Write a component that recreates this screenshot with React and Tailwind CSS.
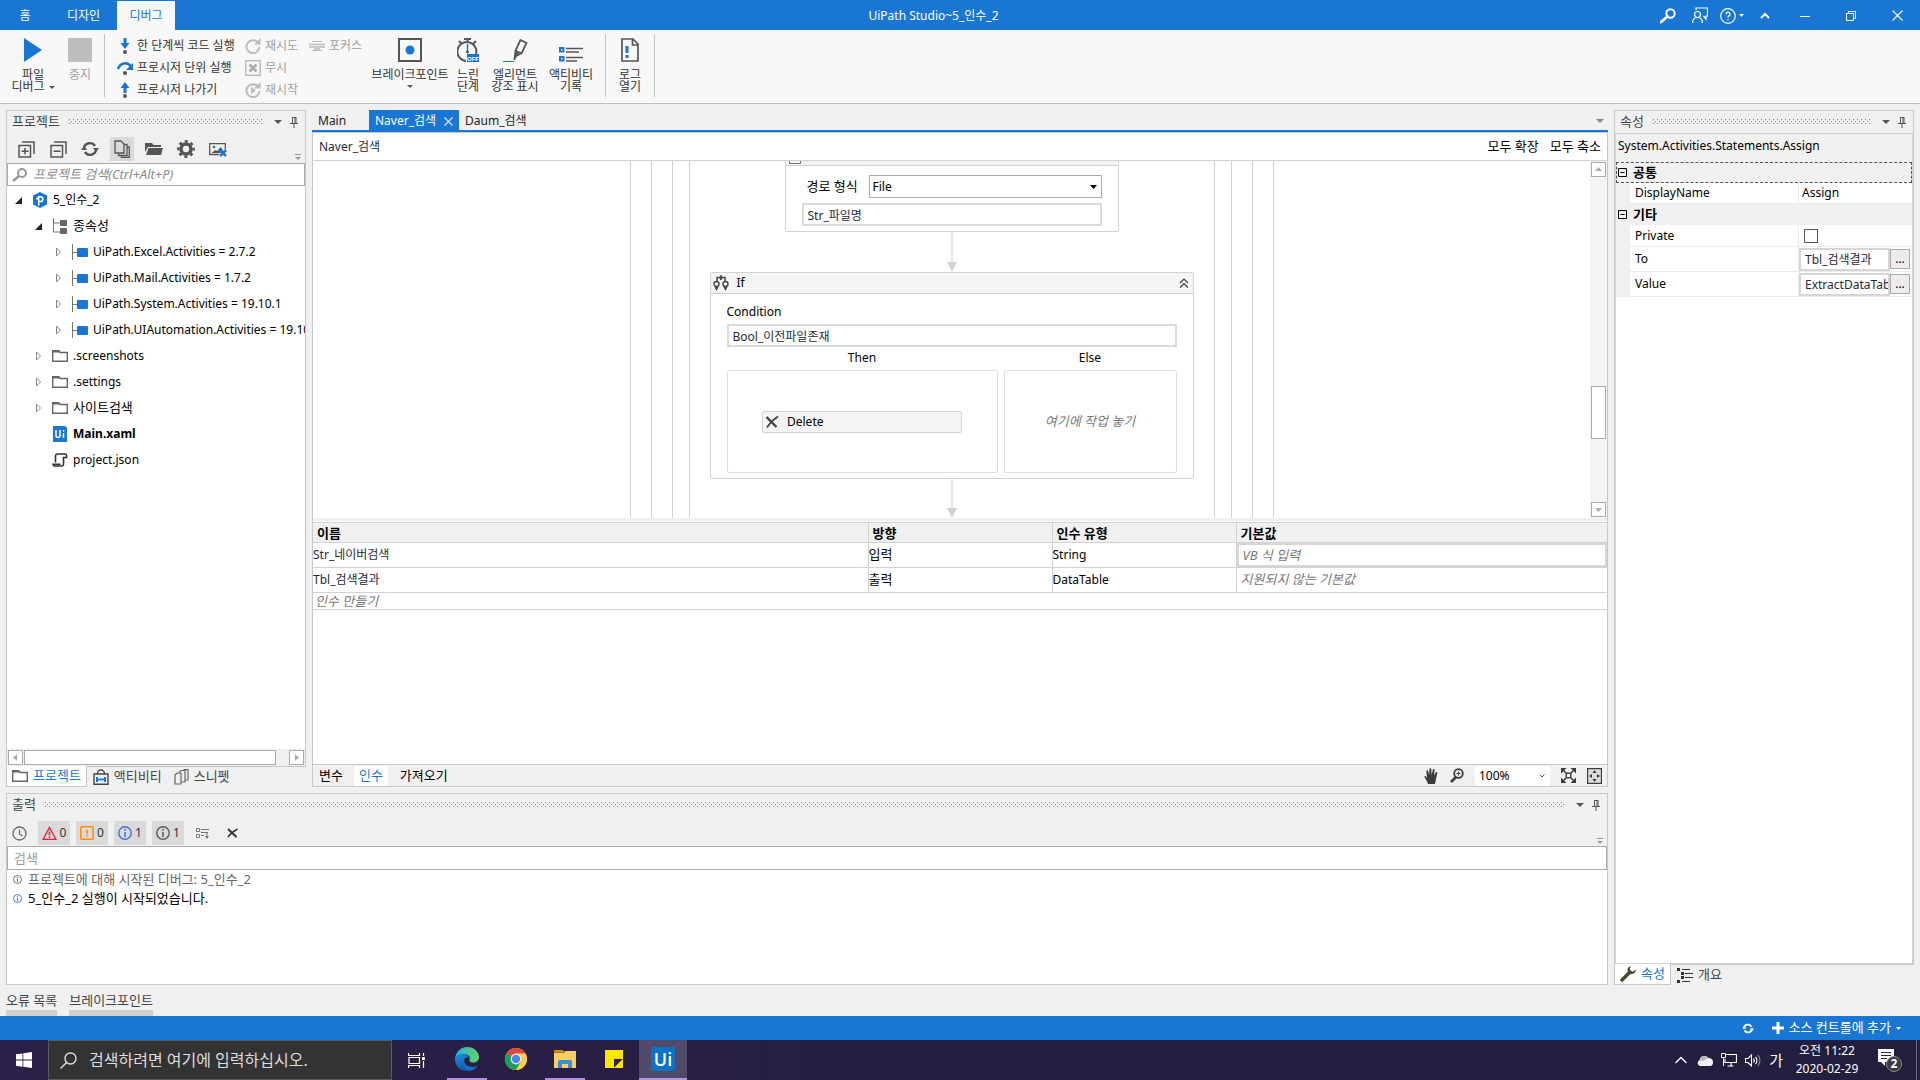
import React from 'react';

const DARK = '#555555';
const BLUE = '#1976d2';

function Svg({ w, h, children, ...rest }) {
  return (
    <svg width={w} height={h} viewBox={`0 0 ${w} ${h}`} fill="none" className="shrink-0" aria-hidden="true" {...rest}>
      {children}
    </svg>
  );
}

/* ---------- shared small pieces ---------- */

function Dots() {
  return (
    <svg className="h-[6px] w-0 flex-1" aria-hidden="true">
      <defs>
        <pattern id="grip" width="4" height="4" patternUnits="userSpaceOnUse">
          <rect x="0" y="0" width="1" height="1" fill="#8a8a8a" />
          <rect x="2" y="2" width="1" height="1" fill="#8a8a8a" />
        </pattern>
      </defs>
      <rect width="100%" height="5" fill="url(#grip)" />
    </svg>
  );
}

function Caret({ color = DARK, w = 8, h = 4 }) {
  return (
    <Svg w={w} h={h}>
      <path d={`M0 0H${w}L${w / 2} ${h}Z`} fill={color} />
    </Svg>
  );
}

function Pin() {
  return (
    <Svg w={8} h={11}>
      <path d="M2 .5h4M2.500 0v6M5 0v6M6 0v6M0 6.500h8M4 7v4" stroke={DARK} />
    </Svg>
  );
}

function PanelHeader({ title }) {
  return (
    <div className="flex h-[22px] items-center pl-[5px] pr-[7px] text-[#444]">
      <h2 className="whitespace-nowrap text-[13px]">{title}</h2>
      <div className="flex min-w-0 flex-1 items-center px-[9px]">
        <Dots />
      </div>
      <button aria-label="메뉴" className="p-[3px]"><Caret /></button>
      <button aria-label="고정" className="ml-[5px]"><Pin /></button>
    </div>
  );
}

function Overflow() {
  return (
    <Svg w={6} h={7}>
      <path d="M0 .5h6" stroke="#999" />
      <path d="M0 3h6L3 6z" fill="#999" />
    </Svg>
  );
}

function ScrollButton({ dir }) {
  const paths = {
    up: 'M3 8h7L6.500 4z',
    down: 'M3 5h7L6.500 9z',
    left: 'M8 3v7L4 6.500z',
    right: 'M5 3v7L9 6.500z',
  };
  return (
    <button aria-label={dir} className="size-[15px] shrink-0 border border-[#ababab] bg-white">
      <Svg w={13} h={13}><path d={paths[dir]} fill="#ababab" /></Svg>
    </button>
  );
}

/* ---------- title bar ---------- */

function TitleBar() {
  return (
    <header className="flex h-[30px] bg-[#1976d2] pt-px text-xs text-white">
      <div className="flex flex-1">
        <button className="w-[50px]">홈</button>
        <button className="w-[67px]">디자인</button>
        <button className="w-[58px] bg-[#f8f8f8] text-[#1976d2]">디버그</button>
      </div>
      <h1 className="flex items-center pr-9">UiPath Studio~5_인수_2</h1>
      <div className="flex flex-1 items-center justify-end pr-[17px]">
        <button aria-label="검색">
          <Svg w={16} h={16}>
            <circle cx="10.500" cy="5.500" r="4.200" stroke="#fff" strokeWidth="2" />
            <path d="M7.500 8.500L1 14" stroke="#fff" strokeWidth="2.800" strokeLinecap="round" />
          </Svg>
        </button>
        <button aria-label="피드백" className="ml-4">
          <Svg w={16} h={17}>
            <path d="M4 3V1h11.500v8H14v3l-2.500-3" stroke="#fff" strokeWidth="1.200" />
            <circle cx="5.500" cy="7.500" r="3" stroke="#fff" strokeWidth="1.200" />
            <path d="M.6 16c0-3.500 2-5.500 4.900-5.500s4.900 2 4.900 5.500" stroke="#fff" strokeWidth="1.200" />
          </Svg>
        </button>
        <button aria-label="도움말" className="ml-3 flex items-center gap-[3px]">
          <Svg w={16} h={16}>
            <circle cx="8" cy="8" r="7.300" stroke="#fff" strokeWidth="1.200" />
            <path d="M6 6.200a2 2 0 1 1 3 1.700c-.7.400-1 .7-1 1.600M8 11v1.300" stroke="#fff" strokeWidth="1.300" />
          </Svg>
          <Caret color="#fff" w={5} h={3} />
        </button>
        <button aria-label="리본 축소" className="ml-4">
          <Svg w={10} h={7}><path d="M1 6l4-4 4 4" stroke="#fff" strokeWidth="2" /></Svg>
        </button>
        <button aria-label="최소화" className="ml-[30px]">
          <Svg w={10} h={10}><path d="M0 5.500h10" stroke="#fff" /></Svg>
        </button>
        <button aria-label="이전 크기로" className="ml-9">
          <Svg w={10} h={10}>
            <path d="M.5 2.500h7v7h-7zM2.500 2.500v-2h7v7h-2" stroke="#fff" />
          </Svg>
        </button>
        <button aria-label="닫기" className="ml-9">
          <Svg w={11} h={11}><path d="M.5.5l10 10M10.500.5l-10 10" stroke="#fff" strokeWidth="1.100" /></Svg>
        </button>
      </div>
    </header>
  );
}

/* ---------- ribbon ---------- */

const stepIcons = {
  into: (
    <Svg w={16} h={16}>
      <path d="M6.500 0h3v5h3L8 11 3.500 5h3z" fill={BLUE} />
      <circle cx="8" cy="14" r="2" fill={DARK} />
    </Svg>
  ),
  over: (
    <Svg w={16} h={16}>
      <path d="M1 9c2-6 9-8 13-2.500" stroke={BLUE} strokeWidth="2.500" />
      <path d="M16 3v7H9z" fill={BLUE} />
      <circle cx="8" cy="13" r="2" fill={DARK} />
    </Svg>
  ),
  out: (
    <Svg w={16} h={16}>
      <path d="M6.500 11h3V6h3L8 0 3.500 6h3z" fill={BLUE} />
      <circle cx="8" cy="14" r="2" fill={DARK} />
    </Svg>
  ),
  retry: (
    <Svg w={16} h={16}>
      <path d="M13 4.500A6.500 6.500 0 1 0 14.500 9" stroke="#bbb" strokeWidth="2" />
      <path d="M15.500 0v6.500H9z" fill="#bbb" />
    </Svg>
  ),
  ignore: (
    <Svg w={16} h={16}>
      <rect x=".75" y=".75" width="14.500" height="14.500" stroke="#bbb" strokeWidth="1.500" />
      <path d="M4.500 4.500l7 7M11.500 4.500l-7 7" stroke="#aaa" strokeWidth="2.600" />
    </Svg>
  ),
  restart: (
    <Svg w={16} h={16}>
      <path d="M13 4.500A6.500 6.500 0 1 0 14.500 9" stroke="#bbb" strokeWidth="2" />
      <path d="M15.500 0v6.500H9zM6 5v7l5-3.500z" fill="#bbb" />
    </Svg>
  ),
  focus: (
    <Svg w={16} h={10}>
      <path d="M3 .5h10M3 9.500h10" stroke="#bbb" />
      <path d="M0 3.500h16M0 6h16M5 8h6" stroke="#bbb" strokeWidth="1.500" />
    </Svg>
  ),
};

function SmallButton({ icon, disabled, children }) {
  return (
    <button disabled={disabled} className={`flex h-[22px] items-center gap-1 whitespace-nowrap ${disabled ? 'text-[#a0a0a0]' : 'text-[#333]'}`}>
      <span className="flex w-4">{stepIcons[icon]}</span>
      {children}
    </button>
  );
}

function BigButton({ icon, lines, arrow, className = '' }) {
  return (
    <button className={`flex flex-col items-center pt-2 text-[#333] ${className}`}>
      <span className="mb-[7px] flex h-6 items-end">{icon}</span>
      <span className="whitespace-nowrap leading-3">{lines[0]}</span>
      <span className="flex items-center gap-1 whitespace-nowrap leading-3">
        {lines[1]}
        {arrow && <span className={lines[1] ? '' : 'py-1'}><Caret w={6} h={3} /></span>}
      </span>
    </button>
  );
}

function Sep({ className = '' }) {
  return <div className={`mb-[6px] mt-1 w-px bg-[#c4c4c4] ${className}`} />;
}

function Ribbon() {
  return (
    <div className="flex h-[74px] border-b border-[#bdbdbd] bg-[#f8f8f8] text-xs">
      <BigButton
        className="w-[66px]"
        lines={['파일', '디버그']}
        arrow
        icon={<Svg w={18} h={24}><path d="M0 0l18 12L0 24z" fill={BLUE} /></Svg>}
      />
      <button disabled className="flex w-7 flex-col items-center pt-2 text-[#a0a0a0]">
        <span className="mb-[7px] size-6 bg-[#bdbdbd]" />
        <span className="leading-3">중지</span>
      </button>
      <Sep className="ml-[10px]" />
      <div className="ml-3 w-32 pt-[5px]">
        <SmallButton icon="into">한 단계씩 코드 실행</SmallButton>
        <SmallButton icon="over">프로시저 단위 실행</SmallButton>
        <SmallButton icon="out">프로시저 나가기</SmallButton>
      </div>
      <div className="w-16 pt-[5px]">
        <SmallButton icon="retry" disabled>재시도</SmallButton>
        <SmallButton icon="ignore" disabled>무시</SmallButton>
        <SmallButton icon="restart" disabled>재시작</SmallButton>
      </div>
      <div className="w-[62px] pt-[5px]">
        <SmallButton icon="focus" disabled>포커스</SmallButton>
      </div>
      <BigButton
        className="w-[78px]"
        lines={['브레이크포인트', '']}
        arrow
        icon={
          <Svg w={24} h={24}>
            <rect x="1" y="1" width="22" height="22" stroke={DARK} strokeWidth="2" />
            <circle cx="12" cy="12" r="4.500" fill={BLUE} />
          </Svg>
        }
      />
      <BigButton
        className="w-[38px]"
        lines={['느린', '단계']}
        icon={
          <Svg w={22} h={24}>
            <path d="M19 16A9.500 9.500 0 1 0 9 23M7 1h7M10.500 1v3M2 3l3 3M19 3l-3 3" stroke={DARK} strokeWidth="2" />
            <path d="M10.500 6v7" stroke={BLUE} strokeWidth="1.500" />
            <circle cx="10.500" cy="14" r="1.500" fill={DARK} />
            <rect x="10" y="16" width="12" height="8" fill={BLUE} />
            <text x="16" y="22.500" fontSize="6" fontWeight="bold" fill="#fff" textAnchor="middle" fontFamily="Liberation Sans, sans-serif">OFF</text>
          </Svg>
        }
      />
      <BigButton
        className="w-14"
        lines={['엘리먼트', '강조 표시']}
        icon={
          <Svg w={26} h={24}>
            <path d="M18.500 2l6 3-5 10.500-6-3z" stroke={DARK} strokeWidth="1.800" />
            <path d="M12.500 13l6.500 3.500-4 2-2.500 4-1-.5.5-4z" fill={DARK} />
            <path d="M1 23.500h11" stroke={BLUE} />
          </Svg>
        }
      />
      <BigButton
        className="w-14"
        lines={['액티비티', '기록']}
        icon={
          <Svg w={24} h={15}>
            <rect x="1" y="1" width="3.500" height="3.500" stroke={BLUE} strokeWidth="2" />
            <rect x="1" y="10" width="3.500" height="3.500" stroke={BLUE} strokeWidth="2" />
            <path d="M7 1.500h17M7 5h13M7 10.500h17M7 14h11" stroke={DARK} strokeWidth="1.500" />
          </Svg>
        }
      />
      <Sep className="ml-[6px]" />
      <BigButton
        className="w-12"
        lines={['로그', '열기']}
        icon={
          <Svg w={18} h={24}>
            <path d="M1 1h11l5 5v17H1zM11.500 1v6H17" stroke={DARK} strokeWidth="1.700" />
            <path d="M4.500 8h3v7h-3zM4.500 17h3v3h-3z" fill={BLUE} />
          </Svg>
        }
      />
      <Sep />
    </div>
  );
}

/* ---------- project panel ---------- */

const projectTools = [
  ['모두 확장', (
    <Svg w={17} h={17} key="e">
      <path d="M4 1h12v12M1 4.500h11.500V16H1zM3.500 10.200h7M7 7v6.500" stroke={DARK} strokeWidth="1.500" />
    </Svg>
  )],
  ['모두 축소', (
    <Svg w={17} h={17} key="c">
      <path d="M4 1h12v12M1 4.500h11.500V16H1zM3.500 10.200h7" stroke={DARK} strokeWidth="1.500" />
    </Svg>
  )],
  ['새로 고침', (
    <Svg w={18} h={16} key="r">
      <path d="M3 7a6 6 0 0 1 11-2M15 9a6 6 0 0 1-11 2" stroke={DARK} strokeWidth="2.400" />
      <path d="M12 7h6l-3 4zM0 9h6L3 5z" fill={DARK} />
    </Svg>
  )],
  ['모든 파일 표시', (
    <Svg w={16} h={18} key="f">
      <path d="M1 1h6l3 3v9H1zM10 4.500h3v11H4.500V13M13 7h2.300v10.300H7.500V15.500" stroke={DARK} strokeWidth="1.300" />
    </Svg>
  )],
  ['폴더 열기', (
    <Svg w={18} h={12} key="o">
      <path d="M0 0h7l1.500 2H16v2H3L0 9z" fill={DARK} />
      <path d="M3.500 5H18l-2 7H1z" fill={DARK} />
    </Svg>
  )],
  ['설정', (
    <Svg w={18} h={18} key="g">
      <circle cx="9" cy="9" r="5" stroke={DARK} strokeWidth="3.600" />
      <circle cx="9" cy="9" r="7.600" stroke={DARK} strokeWidth="2.600" strokeDasharray="3 2.970" strokeDashoffset="1.500" />
    </Svg>
  )],
  ['스크린샷 제거', (
    <Svg w={18} h={15} key="s">
      <path d="M10 12.500H.7V1.700h15.600V7" stroke={DARK} strokeWidth="1.300" />
      <path d="M2.500 11l4-3 2 1 3-4 2.500 3-3 3z" fill={DARK} />
      <circle cx="5" cy="5" r="1.300" fill={BLUE} />
      <path d="M11 8l6 6M17 8l-6 6" stroke={BLUE} strokeWidth="2.500" />
    </Svg>
  )],
];

const treeIcons = {
  project: (
    <Svg w={16} h={16}>
      <path d="M8 0l7 3.500v9L8 16l-7-3.500v-9z" fill={BLUE} />
      <path d="M6.700 13.500V4.800h1.800a2.300 2.300 0 0 1 0 4.700H6.700M4.500 7.500l2.200-2.700" stroke="#fff" strokeWidth="1.500" />
    </Svg>
  ),
  deps: (
    <Svg w={16} h={16}>
      <path d="M1.500 0v14H8M1.500 5H8" stroke="#777" />
      <rect x="8" y="2" width="7" height="6" rx="1" fill="#666" />
      <rect x="8" y="10" width="7" height="6" rx="1" fill="#666" />
    </Svg>
  ),
  package: (
    <Svg w={16} h={16}>
      <path d="M.5 0v16M.5 8.500H6" stroke="#777" />
      <rect x="5" y="4" width="11" height="9" rx="1" fill={BLUE} />
    </Svg>
  ),
  folder: (
    <Svg w={16} h={12}>
      <path d="M.7 11.300V.8h6l1.500 1.700h7.100v8.800z" stroke="#666" strokeWidth="1.400" />
      <path d="M0 0h7l1.500 2.500H0z" fill="#666" />
    </Svg>
  ),
  ui: (
    <Svg w={16} h={16}>
      <path d="M1 0h12l2 2v14H1z" fill={BLUE} />
      <path d="M4 4v5.500a2 2 0 0 0 4 0V4M11.500 7v5M11.500 4v1.500" stroke="#fff" strokeWidth="1.500" />
    </Svg>
  ),
  json: (
    <Svg w={16} h={14}>
      <path d="M3.500 9.500V3a2 2 0 0 1 2-2h7.500a1.500 1.500 0 0 1 1.500 1.500v2H11.500V11a2 2 0 0 1-2 2H3.200A2 2 0 0 1 1 11.200h7.500" stroke="#333" strokeWidth="1.600" />
    </Svg>
  ),
};

const tree = [
  { label: '5_인수_2', icon: 'project', open: true, indent: 'pl-2' },
  { label: '종속성', icon: 'deps', open: true, indent: 'pl-7', ko: true },
  { label: 'UiPath.Excel.Activities = 2.7.2', icon: 'package', indent: 'pl-12' },
  { label: 'UiPath.Mail.Activities = 1.7.2', icon: 'package', indent: 'pl-12' },
  { label: 'UiPath.System.Activities = 19.10.1', icon: 'package', indent: 'pl-12' },
  { label: 'UiPath.UIAutomation.Activities = 19.10.1', icon: 'package', indent: 'pl-12' },
  { label: '.screenshots', icon: 'folder', indent: 'pl-7' },
  { label: '.settings', icon: 'folder', indent: 'pl-7' },
  { label: '사이트검색', icon: 'folder', indent: 'pl-7', ko: true },
  { label: 'Main.xaml', icon: 'ui', indent: 'pl-7', leaf: true, bold: true },
  { label: 'project.json', icon: 'json', indent: 'pl-7', leaf: true },
];

function TreeRow({ item }) {
  return (
    <li className={`flex h-[26px] items-center whitespace-nowrap ${item.indent}`}>
      <span className="flex w-[17px] shrink-0">
        {!item.leaf && item.open && <Svg w={7} h={7}><path d="M7 0v7H0z" fill="#222" /></Svg>}
        {!item.leaf && !item.open && <Svg w={7} h={10}><path d="M1.500 1l4 4-4 4z" stroke="#888" /></Svg>}
      </span>
      <span className="mr-[5px] flex w-4 shrink-0">{treeIcons[item.icon]}</span>
      <span className={`${item.ko ? 'text-[13px]' : 'text-xs'} ${item.bold ? 'font-bold' : ''}`}>{item.label}</span>
    </li>
  );
}

function ProjectPanel() {
  return (
    <aside className="flex w-[300px] shrink-0 flex-col">
      <div className="flex flex-1 flex-col border border-[#c8c8c8]">
        <PanelHeader title="프로젝트" />
        <div className="flex h-[30px] items-end gap-2 pb-[2px] pl-[7px] pr-1">
          {projectTools.map(([label, icon], i) => (
            <button key={label} aria-label={label} className={`flex size-6 items-center justify-center ${i === 3 ? 'bg-[#dadada]' : ''}`}>
              {icon}
            </button>
          ))}
          <span className="ml-auto"><Overflow /></span>
        </div>
        <label className="flex h-[23px] items-center border border-[#ababab] bg-white pl-1">
          <Svg w={16} h={14}>
            <circle cx="10" cy="5" r="4" stroke="#999" strokeWidth="2" />
            <path d="M7 8l-6 5" stroke="#999" strokeWidth="2.500" />
          </Svg>
          <input aria-label="프로젝트 검색" placeholder="프로젝트 검색(Ctrl+Alt+P)" className="ml-[5px] min-w-0 flex-1 text-[13px] italic outline-none placeholder:text-[#8a8a8a]" />
        </label>
        <ul className="flex-1 overflow-hidden bg-white pt-px text-black">
          {tree.map((t) => <TreeRow key={t.label} item={t} />)}
        </ul>
        <div className="flex bg-[#f0f0f0] p-px">
          <ScrollButton dir="left" />
          <div className="ml-px mr-[13px] flex-1 border border-[#ababab] bg-white" />
          <ScrollButton dir="right" />
        </div>
      </div>
      <div className="flex h-5 items-center text-[13px] text-[#444]">
        <button className="-mt-px flex h-[21px] items-center gap-[5px] border border-t-0 border-[#c8c8c8] bg-white px-[5px] text-[#1976d2]">
          {treeIcons.folder}프로젝트
        </button>
        <button className="flex items-center gap-[5px] px-[6px]">
          <Svg w={16} h={16}>
            <path d="M1 5h14v10.300H1zM4.500 5a3.500 4 0 0 1 7 0" stroke="#444" strokeWidth="1.400" />
            <path d="M4 10.500h8" stroke={BLUE} strokeWidth="1.800" />
            <path d="M4 8v5M12 8v5" stroke={BLUE} strokeWidth="2" />
          </Svg>
          액티비티
        </button>
        <button className="flex items-center gap-[5px] px-[6px]">
          <Svg w={15} h={16}>
            <path d="M1 6l2-2h4v11H1zM5 3l2-1.500h4V13H8M9 1.500L10.500.6H14V11h-2.500" stroke="#666" strokeWidth="1.200" />
          </Svg>
          스니펫
        </button>
      </div>
    </aside>
  );
}

/* ---------- designer ---------- */

function Arrow({ h }) {
  return (
    <Svg w={10} h={h}>
      <path d={`M5 0v${h - 8}`} stroke="#e6e6e6" strokeWidth="2" />
      <path d={`M0 ${h - 10}h10L5 ${h}z`} fill="#d2d2d2" />
    </Svg>
  );
}

const field = 'block h-[23px] w-full border-2 border-[#dadada] bg-white pl-1 text-xs text-[#1f2a3c] outline-none';

function Workflow() {
  return (
    <div className="flex flex-col items-center">
      <section className="w-[334px] rounded-b-xs border border-t-0 border-[#d2d2d2] bg-white">
        <div className="h-[5px] border-b border-[#d2d2d2] bg-[#f4f4f4] pl-[3px]">
          <div className="h-[3px] w-3 border border-t-0 border-[#777]" />
        </div>
        <div className="flex flex-col gap-[5px] px-4 pb-[5px] pt-[9px]">
          <div className="flex h-[23px] items-center pl-[5px]">
            <label htmlFor="pathType" className="w-[62px] text-[13px]">경로 형식</label>
            <div className="relative flex-1">
              <select id="pathType" className="block h-[23px] w-full appearance-none border border-[#ababab] bg-white pl-[3px] text-xs outline-none">
                <option>File</option>
              </select>
              <span className="pointer-events-none absolute right-[5px] top-[10px] flex"><Caret color="#000" w={7} h={4} /></span>
            </div>
          </div>
          <input aria-label="경로" defaultValue="Str_파일명" className={field} />
        </div>
      </section>
      <Arrow h={40} />
      <section className="w-[484px] rounded-xs border border-[#d2d2d2] bg-white">
        <div className="flex h-[21px] items-center border-b border-[#d2d2d2] bg-[#f4f4f4] pl-[2px] pr-1">
          <Svg w={16} h={16}>
            <path d="M4 6V2.500h8V6M8 0v5" stroke="#444" strokeWidth="1.500" />
            <path d="M6 2.500h4L8 5z" fill="#444" />
            <circle cx="3.500" cy="9" r="2.500" stroke="#444" strokeWidth="1.400" />
            <circle cx="12.500" cy="9" r="2.500" stroke="#444" strokeWidth="1.400" />
            <path d="M1.500 12h4L3.500 16zM10.500 12h4L12.500 16z" fill="#444" />
          </Svg>
          <h3 className="ml-2 flex-1 text-xs">If</h3>
          <button aria-label="축소">
            <Svg w={10} h={10}><path d="M1 5l4-4 4 4M1 9.500l4-4 4 4" stroke="#333c4a" strokeWidth="1.200" /></Svg>
          </button>
        </div>
        <div className="px-4 pb-[5px] pt-[10px]">
          <label htmlFor="cond" className="block h-5 text-xs leading-4">Condition</label>
          <input id="cond" defaultValue="Bool_이전파일존재" className={field} />
          <div className="flex gap-[6px] text-xs">
            <div className="w-[271px]">
              <h4 className="pb-1 pt-[3px] text-center leading-4">Then</h4>
              <div className="flex h-[103px] items-center justify-center rounded-xs border border-[#dedede]">
                <div className="flex h-[22px] w-[200px] items-center rounded-xs border border-[#d2d2d2] bg-[#f4f4f4] pl-[2px]">
                  <Svg w={14} h={14}>
                    <path d="M1.500 2l10 10" stroke="#444" strokeWidth="2.400" />
                    <path d="M13 1.500C9 4 5 8 2 12.500" stroke="#444" strokeWidth="1.800" />
                  </Svg>
                  <span className="ml-2">Delete</span>
                </div>
              </div>
            </div>
            <div className="flex-1">
              <h4 className="pb-1 pt-[3px] text-center leading-4">Else</h4>
              <div className="flex h-[103px] items-center justify-center rounded-xs border border-[#dedede] text-[13px] italic text-[#777]">
                여기에 작업 놓기
              </div>
            </div>
          </div>
        </div>
      </section>
      <Arrow h={39} />
    </div>
  );
}

function Canvas() {
  return (
    <div className="flex bg-white">
      <div className="flex min-w-0 flex-1 justify-center overflow-hidden">
        <div className="border-x border-[#d2d2d2] px-5">
          <div className="border-x border-[#d2d2d2] px-5">
            <div className="border-x border-[#d2d2d2] px-4">
              <div className="w-[526px] border-x border-[#d2d2d2]">
                <Workflow />
              </div>
            </div>
          </div>
        </div>
      </div>
      <div className="flex w-[17px] flex-col items-center bg-[#f4f4f4] py-px">
        <ScrollButton dir="up" />
        <div className="grow-[211]" />
        <div className="h-[53px] w-[15px] border border-[#ababab] bg-white" />
        <div className="grow-[63]" />
        <ScrollButton dir="down" />
      </div>
    </div>
  );
}

const th = 'border-r border-[#d2d2d2] py-0 pl-1 text-left text-[13px] font-bold last:border-r-0';
const td = 'border-r border-[#d2d2d2] p-0 last:border-r-0';

function ArgumentsTable() {
  return (
    <table className="w-full table-fixed border-collapse border-t border-[#d2d2d2] bg-white text-black">
      <colgroup>
        <col />
        <col className="w-[184px]" />
        <col className="w-[184px]" />
        <col className="w-[371px]" />
      </colgroup>
      <thead>
        <tr className="h-5 border-b border-[#d2d2d2] bg-[#f0f0f0] leading-[18px]">
          <th className={th}>이름</th>
          <th className={th}>방향</th>
          <th className={th}>인수 유형</th>
          <th className={th}>기본값</th>
        </tr>
      </thead>
      <tbody>
        <tr className="h-[25px] border-b border-[#d2d2d2]">
          <td className={`${td} text-xs text-[#1f2a3c]`}>Str_네이버검색</td>
          <td className={`${td} text-[13px]`}>입력</td>
          <td className={`${td} text-xs`}>String</td>
          <td className={td}>
            <input aria-label="기본값" placeholder="VB 식 입력" className="block h-6 w-full border-2 border-[#d6d6d6] pl-1 text-[13px] italic outline-none placeholder:text-[#777]" />
          </td>
        </tr>
        <tr className="h-[25px] border-b border-[#d2d2d2]">
          <td className={`${td} text-xs text-[#1f2a3c]`}>Tbl_검색결과</td>
          <td className={`${td} text-[13px]`}>출력</td>
          <td className={`${td} text-xs`}>DataTable</td>
          <td className={`${td} text-[13px] italic text-[#777]`}><span className="pl-1">지원되지 않는 기본값</span></td>
        </tr>
        <tr className="h-[17px] border-b border-[#d2d2d2]">
          <td colSpan={4} className="p-0 text-[13px] italic leading-4 text-[#777]"><span className="pl-[2px]">인수 만들기</span></td>
        </tr>
      </tbody>
    </table>
  );
}

function Designer() {
  return (
    <main className="flex min-w-0 flex-1 flex-col">
      <div className="flex h-[22px] items-stretch border-b-2 border-[#1976d2] text-xs text-[#222]">
        <button className="w-[57px] pl-[6px] pt-[2px] text-left">Main</button>
        <button className="flex w-[90px] items-center justify-between bg-[#1976d2] px-[6px] pt-[2px] text-white">
          Naver_검색
          <Svg w={9} h={9}><path d="M.5.5l8 8M8.500.5l-8 8" stroke="#cfe2f6" strokeWidth="1.300" /></Svg>
        </button>
        <button className="pl-[6px] pt-[2px]">Daum_검색</button>
        <button aria-label="탭 목록" className="ml-auto pr-1 pt-[2px]"><Caret color="#888" /></button>
      </div>
      <div className="flex flex-1 flex-col border border-[#c8c8c8] bg-white">
        <div className="flex h-7 items-center border-b border-[#d2d2d2] pl-[6px] pr-[6px]">
          <span className="flex-1 text-xs text-[#1f2a3c]">Naver_검색</span>
          <button className="text-[13px]">모두 확장</button>
          <button className="ml-[11px] text-[13px]">모두 축소</button>
        </div>
        <Canvas />
        <div className="h-[3px] bg-[#f0f0f0]" />
        <div className="flex-1 pt-px">
          <ArgumentsTable />
        </div>
        <div className="flex h-[22px] items-center border-t border-[#c8c8c8] bg-[#f0f0f0] text-[13px] text-black">
          <button className="px-[6px]">변수</button>
          <button className="ml-[5px] h-5 bg-white px-[5px] text-[#1976d2]">인수</button>
          <button className="ml-3">가져오기</button>
          <div className="ml-auto flex items-center pr-[5px]">
            <button aria-label="이동">
              <Svg w={14} h={16}>
                <path d="M4 16C3.500 13 1 11 .3 8.500c.3-1 1.300-.7 2.700 1.300L2.300 3c.5-1 1.500-.8 1.800 0L5.200 7 5.400 1c.4-1 1.600-1 1.900 0l.3 6 1.300-5.500c.5-.9 1.600-.6 1.700.3L10 7.500l1.800-3.300c.7-.7 1.700-.1 1.500.8L12 11l-1 5z" fill="#3c3c3c" />
              </Svg>
            </button>
            <button aria-label="확대" className="ml-3">
              <Svg w={14} h={15}>
                <circle cx="8.500" cy="5.500" r="4.300" stroke="#3c3c3c" strokeWidth="1.800" />
                <path d="M6 9l-5 5" stroke="#3c3c3c" strokeWidth="2.600" />
                <path d="M8.500 3.500v4M6.500 5.500h4" stroke="#3c3c3c" />
              </Svg>
            </button>
            <div className="relative ml-[11px]">
              <select aria-label="배율" className="block h-5 w-[75px] appearance-none bg-white pl-1 text-xs outline-none">
                <option>100%</option>
              </select>
              <span className="pointer-events-none absolute right-[5px] top-2 flex">
                <Svg w={6} h={4}><path d="M.5.5L3 3 5.500.5" stroke="#555" /></Svg>
              </span>
            </div>
            <button aria-label="화면에 맞추기" className="ml-[11px]">
              <Svg w={15} h={15}>
                <rect x="5.200" y="5.200" width="4.600" height="4.600" stroke="#3c3c3c" strokeWidth="1.400" />
                <path d="M0 0h5.500L0 5.500zM15 0v5.500L9.500 0zM0 15V9.500L5.500 15zM15 15H9.500L15 9.500z" fill="#3c3c3c" />
                <path d="M1 1l4 4M14 1l-4 4M1 14l4-4M14 14l-4-4" stroke="#3c3c3c" strokeWidth="1.500" />
              </Svg>
            </button>
            <button aria-label="개요" className="ml-[11px]">
              <Svg w={15} h={16}>
                <rect x=".6" y=".6" width="13.800" height="14.800" fill="#dcdcdc" stroke="#3c3c3c" strokeWidth="1.200" />
                <path d="M7.500 2l2 3h-4zM7.500 14l2-3h-4zM2 8l3-2v4zM13 8l-3-2v4z" fill="#3c3c3c" />
              </Svg>
            </button>
          </div>
        </div>
      </div>
    </main>
  );
}

/* ---------- output ---------- */

function InfoIcon({ size = 14, color }) {
  return (
    <svg width={size} height={size} viewBox="0 0 14 14" fill="none" className="shrink-0" aria-hidden="true">
      <circle cx="7" cy="7" r="6.200" stroke={color} strokeWidth="1.400" />
      <path d="M7 6v5M7 3v1.700" stroke={color} strokeWidth="1.500" />
    </svg>
  );
}

function OutputPanel() {
  const toggle = 'flex h-6 w-8 items-center justify-center gap-[3px] bg-[#dadada]';
  return (
    <section className="flex flex-col border border-[#c8c8c8]">
      <PanelHeader title="출력" />
      <div className="flex h-[30px] items-end gap-[6px] pb-px pl-[5px] pr-1 text-xs text-[#333]">
        <button aria-label="타임스탬프" className="mr-[5px] flex h-6 items-center">
          <Svg w={15} h={15}>
            <circle cx="7.500" cy="7.500" r="6.500" stroke="#666" strokeWidth="1.300" />
            <path d="M7.500 3.500v4.500l3 2" stroke="#666" strokeWidth="1.200" />
          </Svg>
        </button>
        <button className={toggle}>
          <Svg w={15} h={14}>
            <path d="M7.500 1.500l6.500 12H1z" stroke="#e0223c" strokeWidth="1.400" />
            <path d="M7.500 5.500v4M7.500 10.500v1.500" stroke="#e0223c" strokeWidth="1.600" />
          </Svg>
          0
        </button>
        <button className={toggle}>
          <Svg w={14} h={14}>
            <rect x=".8" y=".8" width="12.400" height="12.400" rx="1" stroke="#ff8c00" strokeWidth="1.500" />
            <path d="M7 3.500v4.500M7 9.300v1.500" stroke="#ff8c00" strokeWidth="1.500" />
          </Svg>
          0
        </button>
        <button className={toggle}><InfoIcon color="#3f6fe0" />1</button>
        <button className={toggle}><InfoIcon color="#5a5a5a" />1</button>
        <button aria-label="줄 바꿈" className="ml-[6px] flex h-6 items-center">
          <Svg w={13} h={11}>
            <path d="M.5.500h3v3h-3zM.5 6.500h3v3h-3z" stroke="#777" />
            <path d="M5 1.500h8M5 4.500h7M5 7.500h3M11 5v4" stroke="#777" />
            <path d="M9 8h4l-2 3z" fill="#777" />
          </Svg>
        </button>
        <button aria-label="모두 지우기" className="ml-3 flex h-6 items-center">
          <Svg w={11} h={10}>
            <path d="M1 1l8.500 8" stroke="#333" strokeWidth="2" />
            <path d="M10.500 1C7 3 3 6 1 9" stroke="#333" strokeWidth="1.500" />
          </Svg>
        </button>
        <span className="ml-auto"><Overflow /></span>
      </div>
      <input aria-label="검색" placeholder="검색" className="h-6 w-full border border-[#ababab] bg-white pl-[6px] text-[13px] outline-none placeholder:text-[#9a9a9a]" />
      <ul className="min-h-[114px] bg-white pl-[6px] text-[13px]">
        <li className="flex h-[19px] items-center gap-[6px] text-[#666]">
          <InfoIcon size={9} color="#666" />프로젝트에 대해 시작된 디버그: 5_인수_2
        </li>
        <li className="flex h-[19px] items-center gap-[6px] text-black">
          <InfoIcon size={9} color="#3f6fe0" />5_인수_2 실행이 시작되었습니다.
        </li>
      </ul>
    </section>
  );
}

/* ---------- properties ---------- */

function Category({ children, focused }) {
  return (
    <div className={`flex h-[21px] items-center gap-[6px] border bg-[#f0f0f0] pl-px ${focused ? 'border-dashed border-[#555]' : 'border-transparent'}`}>
      <button aria-label="접기">
        <Svg w={9} h={9}><path d="M.5.5h8v8h-8zM2.500 4.500h4" stroke="#000" /></Svg>
      </button>
      <h3 className="text-[13px] font-bold text-black">{children}</h3>
    </div>
  );
}

function Prop({ label, id, height, children }) {
  return (
    <div className={`flex bg-[#f0f0f0] pl-[14px] ${height}`}>
      <label htmlFor={id} className="flex flex-1 items-center border-b border-[#ececec] bg-white pl-[5px]">{label}</label>
      <div className="flex w-[114px] items-center border-b border-l border-[#ececec] bg-white">{children}</div>
    </div>
  );
}

function PropertiesPanel() {
  const input = 'h-[23px] w-[91px] border-2 border-[#d6d6d6] bg-white pl-1 text-xs text-[#1f2a3c] outline-none';
  const more = 'h-5 w-5 border border-[#ababab] bg-[#ececec] leading-4';
  return (
    <aside className="flex w-[300px] shrink-0 flex-col">
      <div className="flex flex-1 flex-col border border-[#c8c8c8]">
        <PanelHeader title="속성" />
        <div className="flex flex-1 flex-col border border-[#d2d2d2] bg-white text-xs text-black">
          <p className="flex h-7 items-center bg-[#f0f0f0] pb-1 pl-[2px]">System.Activities.Statements.Assign</p>
          <Category focused>공통</Category>
          <Prop label="DisplayName" id="dn" height="h-[21px]">
            <input id="dn" defaultValue="Assign" className="w-full pl-[3px] outline-none" />
          </Prop>
          <Category>기타</Category>
          <Prop label="Private" id="pv" height="h-[22px]">
            <input id="pv" type="checkbox" className="ml-[5px] size-[14px] appearance-none border border-[#555] bg-white" />
          </Prop>
          <Prop label="To" id="to" height="h-[25px]">
            <input id="to" defaultValue="Tbl_검색결과" className={input} />
            <button aria-label="To 편집" className={more}>...</button>
          </Prop>
          <Prop label="Value" id="val" height="h-[25px]">
            <input id="val" defaultValue="ExtractDataTable" className={input} />
            <button aria-label="Value 편집" className={more}>...</button>
          </Prop>
        </div>
      </div>
      <div className="flex h-5 items-center text-[13px] text-[#444]">
        <button className="-mt-px flex h-[21px] items-center gap-[5px] border border-t-0 border-[#c8c8c8] bg-white px-[5px] text-[#1976d2]">
          <Svg w={16} h={16}>
            <path d="M2 14l8-8" stroke="#4a4636" strokeWidth="3.500" strokeLinecap="round" />
            <path d="M15.500 3.500a4 4 0 1 1-4.500-3.300L9.800 3l.8 2.300 2.400.4z" fill="#4a4636" />
          </Svg>
          속성
        </button>
        <button className="flex items-center gap-[5px] px-[6px]">
          <Svg w={16} h={15}>
            <path d="M0 0h3v3H0zM4 4h3v3H4zM4 8h3v3H4zM0 12h3v3H0z" fill="#333" />
            <path d="M5 1.500h8M8 5.500h8M8 9.500h8M5 13.500h8" stroke="#333" />
          </Svg>
          개요
        </button>
      </div>
    </aside>
  );
}

/* ---------- bottom bars ---------- */

function StatusBar() {
  return (
    <footer className="flex h-6 items-center justify-end bg-[#1976d2] pr-[19px] text-[13px] text-white">
      <Svg w={12} h={11}>
        <path d="M2 5.500a4 4 0 0 1 7.500-1.800M10 5.500a4 4 0 0 1-7.500 1.800" stroke="#fff" strokeWidth="1.800" />
        <path d="M7.500 5.500H12L10 8zM4.500 5.500H0L2 3z" fill="#fff" />
      </Svg>
      <button className="ml-[18px] flex items-center gap-[5px]">
        <Svg w={12} h={12}><path d="M6 0v12M0 6h12" stroke="#fff" strokeWidth="3" /></Svg>
        소스 컨트롤에 추가
        <Caret color="#fff" w={5} h={3} />
      </button>
    </footer>
  );
}

const apps = [
  ['Edge', 'border-[#b392e0]', (
    <Svg w={24} h={24}>
      <defs>
        <linearGradient id="edgeA" x1="0" y1="0" x2="1" y2="0">
          <stop offset="0" stopColor="#2aa8ea" />
          <stop offset="1" stopColor="#5fd95a" />
        </linearGradient>
        <linearGradient id="edgeB" x1="0" y1="0" x2="0.600" y2="1">
          <stop offset="0" stopColor="#1c8fe0" />
          <stop offset="1" stopColor="#0c4fa0" />
        </linearGradient>
      </defs>
      <path d="M0 12C.5 5 5.500 0 12 0c7 0 12 5 12 10 0 4-3 5.500-6 5.500-2.500 0-4-1-3.500-2.500 1.500-3-1-6-5-5.500C5 8 1 9 0 12z" fill="url(#edgeA)" />
      <path d="M0 12c1-4 5-5.500 8.500-5 3.500.4 5 2.500 5.500 4-2-1.500-5.500 0-5 4 .6 4.500 6 7 13.500 4C20 22.500 16 24 12 24 5 24 0 19 0 12z" fill="url(#edgeB)" />
      <path d="M9 13c-2 4 0 9 5 10.800C19 23.500 21.500 20.500 22.500 19 16 21.500 9.500 19 9 13z" fill="#1b6fc4" />
    </Svg>
  )],
  ['Chrome', 'border-transparent', (
    <Svg w={24} h={24}>
      <circle cx="12" cy="12" r="11" fill="#ffcd40" />
      <path d="M12 12L2.500 6.500A11 11 0 0 1 21.500 6.500z" fill="#db4a3c" />
      <path d="M12 12L2.500 6.500A11 11 0 0 0 12 23l5-8.500z" fill="#1a9f5b" />
      <path d="M12 6.500h9.500A11 11 0 0 1 12 23l5-8z" fill="#ffcd40" />
      <circle cx="12" cy="12" r="5.400" fill="#f1f1f1" />
      <circle cx="12" cy="12" r="4.200" fill="#4a86f0" />
    </Svg>
  )],
  ['파일 탐색기', 'border-[#b392e0]', (
    <Svg w={22} h={20}>
      <path d="M0 1h9l1.500 2H0z" fill="#d99000" />
      <path d="M0 3.500h10L11.500 2H22v17H0z" fill="#f9cf63" />
      <path d="M4 19v-6.500A1.500 1.500 0 0 1 5.500 11h11a1.500 1.500 0 0 1 1.500 1.500V19h-4v-4H8v4z" fill="#3b8fd2" />
    </Svg>
  )],
  ['스티커 메모', 'border-transparent', (
    <Svg w={18} h={18}>
      <path d="M0 0h18v18H0z" fill="#ffe600" />
      <path d="M9 9h9l-9 9z" fill="#2b2648" />
      <path d="M18 9v9H9z" fill="#ffe600" />
    </Svg>
  )],
];

function Taskbar() {
  return (
    <nav className="flex h-10 bg-linear-to-r from-[#2c1f48] to-[#211e3e] text-white">
      <button aria-label="시작" className="flex w-12 items-center justify-center">
        <Svg w={16} h={16}>
          <path d="M0 2.300L6.500 1.400v6.200H0zM7.300 1.300L16 0v7.600H7.300zM0 8.400h6.500v6.300L0 13.800zM7.300 8.400H16V16l-8.700-1.300z" fill="#fff" />
        </Svg>
      </button>
      <label className="flex w-[344px] items-center border border-[#5c5c5c] bg-[#333] pl-[11px]">
        <Svg w={17} h={17}>
          <circle cx="10.500" cy="6.500" r="5.500" stroke="#ddd" strokeWidth="1.400" />
          <path d="M6.500 10.500L.5 16.500" stroke="#ddd" strokeWidth="1.400" />
        </Svg>
        <input aria-label="Windows 검색" placeholder="검색하려면 여기에 입력하십시오." className="ml-3 min-w-0 flex-1 bg-transparent text-base outline-none placeholder:text-[#ddd]" />
      </label>
      <button aria-label="작업 보기" className="flex w-12 items-center justify-center">
        <Svg w={17} h={15}>
          <path d="M.5 0v2.500h11V0M.5 15v-2.500h11V15M1 4.500h10.500v6H1zM15.500 0v3M15.500 8v7" stroke="#fff" strokeWidth="1.200" />
          <rect x="14" y="4" width="3" height="3" fill="#fff" />
        </Svg>
      </button>
      <div className="ml-[7px] flex gap-[9px]">
        {apps.map(([name, border, icon]) => (
          <button key={name} aria-label={name} className={`flex w-10 items-center justify-center border-b-2 ${border}`}>
            {icon}
          </button>
        ))}
      </div>
      <button className="ml-[5px] flex w-12 items-center justify-center border-b-2 border-[#b392e0] bg-[#504a68]">
        <span className="flex size-6 items-center justify-center bg-[#0b72c4] font-['Open_Sans'] text-[18px] font-semibold leading-none">Ui</span>
      </button>
      <div className="ml-auto flex items-center">
        <button aria-label="숨겨진 아이콘">
          <Svg w={12} h={8}><path d="M.5 7L6 1.500 11.500 7" stroke="#fff" strokeWidth="1.300" /></Svg>
        </button>
        <Svg w={16} h={11} className="ml-[10px] shrink-0">
          <path d="M3 11a3 3 0 0 1-.5-5.700A5 5 0 0 1 11.500 3a4 4 0 0 1 4.500 4c0 2.500-1 4-3 4z" fill="#f2f2f2" />
          <path d="M2.500 5.300A5 5 0 0 1 11.500 3L6 6z" fill="#b8b8c0" />
        </Svg>
        <Svg w={16} h={14} className="ml-2 shrink-0">
          <path d="M5 1.500h10.500v8H4V6M10 9.500v3M6.500 13h6" stroke="#fff" strokeWidth="1.200" />
          <path d="M.5.5h4v4h-4zM2.500 4.500V13" stroke="#fff" />
        </Svg>
        <Svg w={16} h={13} className="ml-2 shrink-0">
          <path d="M.5 4.500h2.500l3.500-3.500v11L3 8.500H.5z" stroke="#fff" strokeWidth="1.100" />
          <path d="M8.500 4.500a3 3 0 0 1 0 4M10.500 3a5 5 0 0 1 0 7" stroke="#fff" strokeWidth="1.100" />
          <path d="M12.800 1a8 8 0 0 1 0 11" stroke="#8a86a0" strokeWidth="1.100" />
        </Svg>
        <span className="ml-2 text-[15px]">가</span>
        <div className="ml-[10px] w-[68px] whitespace-nowrap text-center text-xs leading-[18px]">
          <div>오전 11:22</div>
          <div>2020-02-29</div>
        </div>
        <button aria-label="알림" className="relative ml-[17px] mr-[14px] flex">
          <Svg w={24} h={24}>
            <path d="M0 1h16v13H7v4l-4-4H0z" fill="#fff" />
            <path d="M3 4.500h10M3 7.500h10M3 10.500h6" stroke="#2a2547" />
            <circle cx="16" cy="16" r="7.500" fill="#3a3a3e" stroke="#8a8a8a" />
          </Svg>
          <span className="absolute bottom-0 right-0 w-4 text-center text-xs font-bold leading-4">2</span>
        </button>
        <div className="mr-[3px] h-10 w-px bg-[#6a6780]" />
      </div>
    </nav>
  );
}

export default function App() {
  return (
    <div className="flex min-h-screen flex-col bg-[#f0f0f0] font-['Noto_Sans','Noto_Sans_CJK_KR',sans-serif]">
      <TitleBar />
      <Ribbon />
      <div className="flex flex-1 gap-[6px] px-[6px] pt-[6px]">
        <div className="flex min-w-0 flex-1 flex-col">
          <div className="mb-[6px] flex flex-1 gap-[6px]">
            <ProjectPanel />
            <Designer />
          </div>
          <OutputPanel />
        </div>
        <PropertiesPanel />
      </div>
      <div className="flex gap-3 px-[6px] pt-[6px] text-[13px] leading-[19px] text-[#444]">
        <button className="border-b-6 border-[#d0d0d0]">오류 목록</button>
        <button className="border-b-6 border-[#d0d0d0]">브레이크포인트</button>
      </div>
      <StatusBar />
      <Taskbar />
    </div>
  );
}
